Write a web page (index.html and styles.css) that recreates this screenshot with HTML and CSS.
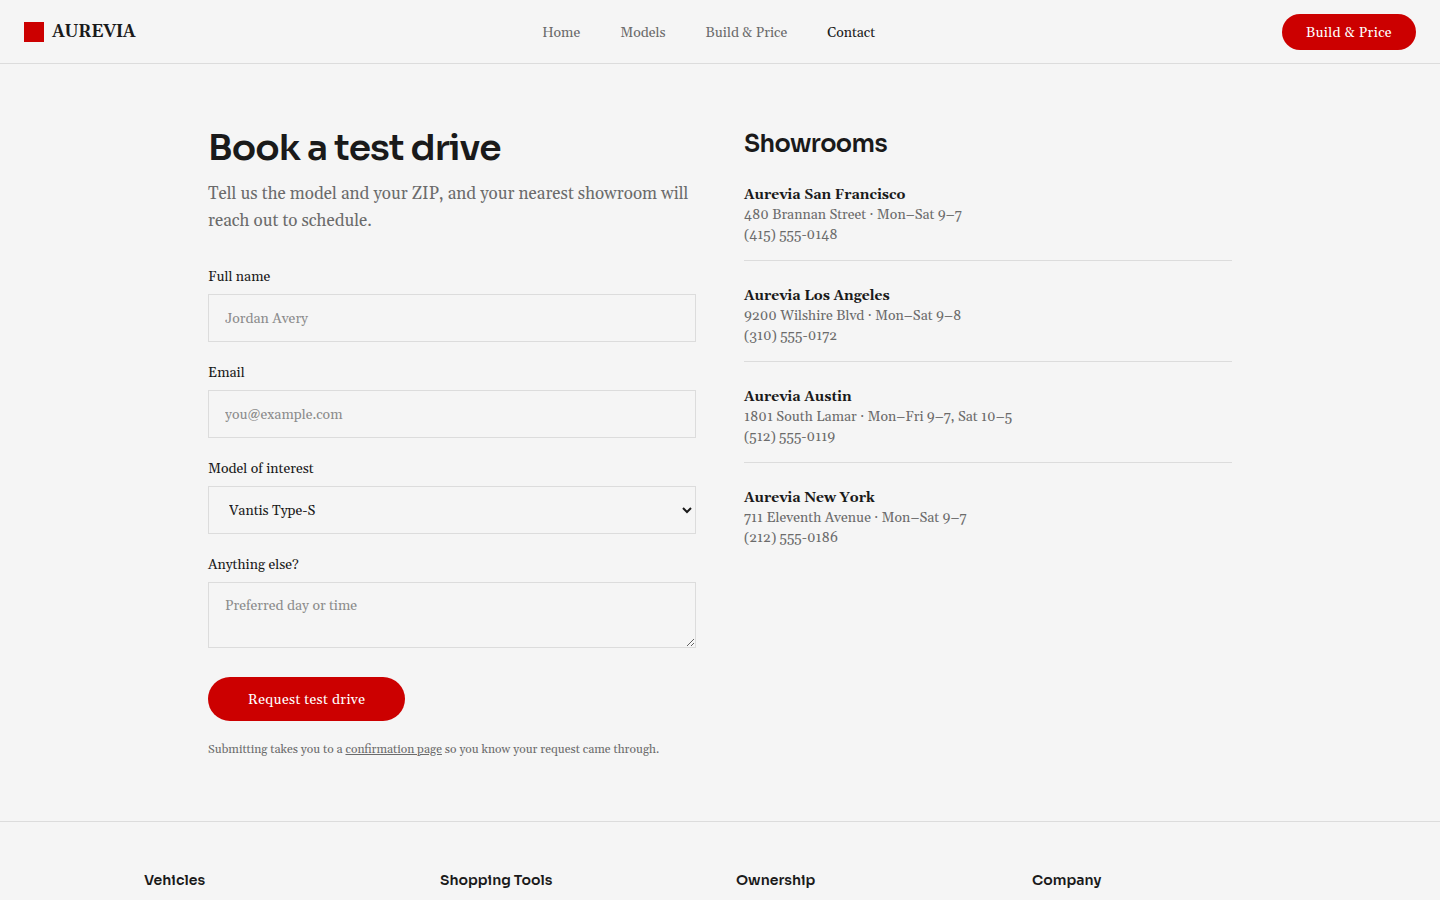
FILE: index.html
```html
<!DOCTYPE html>
<html lang="en">
<head>
  <meta charset="UTF-8">
  <title>Contact - Aurevia</title>
  <meta name="viewport" content="width=device-width, initial-scale=1">
  <link rel="stylesheet" href="styles.css">
</head>
<body>
  <header class="nav">
    <a class="brand" href="#"><span class="brand-mark"></span><span class="brand-name">AUREVIA</span></a>
    <nav class="nav-links">
      <a href="#">Home</a>
      <a href="#">Models</a>
      <a href="#">Build &amp; Price</a>
      <a href="#" class="active">Contact</a>
    </nav>
    <a class="btn btn-small" href="#">Build &amp; Price</a>
  </header>

  <main class="contact">
    <section>
      <h1>Book a test drive</h1>
      <p class="lead">Tell us the model and your ZIP, and your nearest showroom will reach out to schedule.</p>
      <form>
        <div class="field">
          <label for="name">Full name</label>
          <input id="name" type="text" placeholder="Jordan Avery">
        </div>
        <div class="field">
          <label for="email">Email</label>
          <input id="email" type="email" placeholder="you@example.com">
        </div>
        <div class="field">
          <label for="model">Model of interest</label>
          <select id="model">
            <option>Vantis Type-S</option>
          </select>
        </div>
        <div class="field">
          <label for="notes">Anything else?</label>
          <textarea id="notes" placeholder="Preferred day or time"></textarea>
        </div>
        <button class="btn" type="submit">Request test drive</button>
      </form>
      <p class="note">Submitting takes you to a <a href="#">confirmation page</a> so you know your request came through.</p>
    </section>

    <section>
      <h2>Showrooms</h2>
      <div class="showroom">
        <strong>Aurevia San Francisco</strong>
        <p>480 Brannan Street · Mon–Sat 9–7</p>
        <p>(415) 555-0148</p>
      </div>
      <div class="showroom">
        <strong>Aurevia Los Angeles</strong>
        <p>9200 Wilshire Blvd · Mon–Sat 9–8</p>
        <p>(310) 555-0172</p>
      </div>
      <div class="showroom">
        <strong>Aurevia Austin</strong>
        <p>1801 South Lamar · Mon–Fri 9–7, Sat 10–5</p>
        <p>(512) 555-0119</p>
      </div>
      <div class="showroom">
        <strong>Aurevia New York</strong>
        <p>711 Eleventh Avenue · Mon–Sat 9–7</p>
        <p>(212) 555-0186</p>
      </div>
    </section>
  </main>

  <footer class="footer">
    <div class="footer-grid">
      <h4>Vehicles</h4>
      <h4>Shopping Tools</h4>
      <h4>Ownership</h4>
      <h4>Company</h4>
    </div>
  </footer>
</body>
</html>
```
FILE: styles.css
```css
* {
  box-sizing: border-box;
  margin: 0;
  padding: 0;
}

body {
  background: #f5f5f5;
  color: #1a1a1a;
  font-family: Gelasio, Georgia, "Liberation Serif", serif;
  font-size: 14px;
  line-height: 20px;
}

a {
  color: inherit;
  text-decoration: none;
}

.nav {
  display: flex;
  align-items: center;
  justify-content: space-between;
  height: 64px;
  padding: 0 24px;
  border-bottom: 1px solid #dcdcdc;
}

.brand {
  display: flex;
  align-items: center;
  gap: 8px;
  font-size: 17px;
  font-weight: 700;
  letter-spacing: -0.025em;
}

.brand-mark {
  width: 20px;
  height: 20px;
  background: #cc0000;
}

.brand-name {
  line-height: 22px;
}

.nav-links {
  display: flex;
  gap: 40px;
  padding-top: 2px;
  color: #6b6b6b;
}

.nav-links .active {
  color: #1a1a1a;
}

.btn {
  display: inline-flex;
  align-items: center;
  height: 44px;
  padding: 2px 40px 0;
  border: none;
  border-radius: 22px;
  background: #cc0000;
  color: #fff;
  font: inherit;
  letter-spacing: 0.35px;
}

.btn-small {
  height: 36px;
  padding: 2px 24px 0;
}

.contact {
  display: grid;
  grid-template-columns: 1fr 1fr;
  gap: 48px;
  width: 1024px;
  margin: 0 auto;
  padding: 64px 0 61px;
}

h1, h2, h4 {
  font-family: Sora, Inter, sans-serif;
  font-weight: 600;
}

h1 {
  font-size: 36px;
  line-height: 39px;
  letter-spacing: -0.025em;
}

h2 {
  margin-bottom: 25px;
  font-size: 24px;
  line-height: 32px;
  letter-spacing: -0.025em;
}

.lead {
  margin: 14px 0 32px;
  color: #6b6b6b;
  font-size: 17px;
  line-height: 27px;
}

.field {
  margin-bottom: 21px;
}

.field label {
  display: block;
  margin-bottom: 7px;
}

.field input,
.field select,
.field textarea {
  display: block;
  width: 100%;
  height: 48px;
  padding: 13px 16px 11px;
  border: 1px solid #dcdcdc;
  border-radius: 0;
  background: transparent;
  color: #1a1a1a;
  font: inherit;
}

.field textarea {
  height: 66px;
  margin-bottom: 29px;
}

.field ::placeholder {
  color: #8c8c8c;
}

.note {
  margin-top: 19px;
  color: #6b6b6b;
  font-size: 12px;
}

.note a {
  text-decoration: underline;
}

.showroom {
  margin-bottom: 25px;
  padding-bottom: 15px;
  border-bottom: 1px solid #dcdcdc;
  color: #6b6b6b;
}

.showroom:last-child {
  border-bottom: none;
}

.showroom strong {
  display: block;
  color: #1a1a1a;
}

.footer {
  border-top: 1px solid #dcdcdc;
  padding-top: 48px;
}

.footer-grid {
  display: grid;
  grid-template-columns: repeat(4, 1fr);
  gap: 32px;
  width: 1152px;
  margin: 0 auto;
}
```
